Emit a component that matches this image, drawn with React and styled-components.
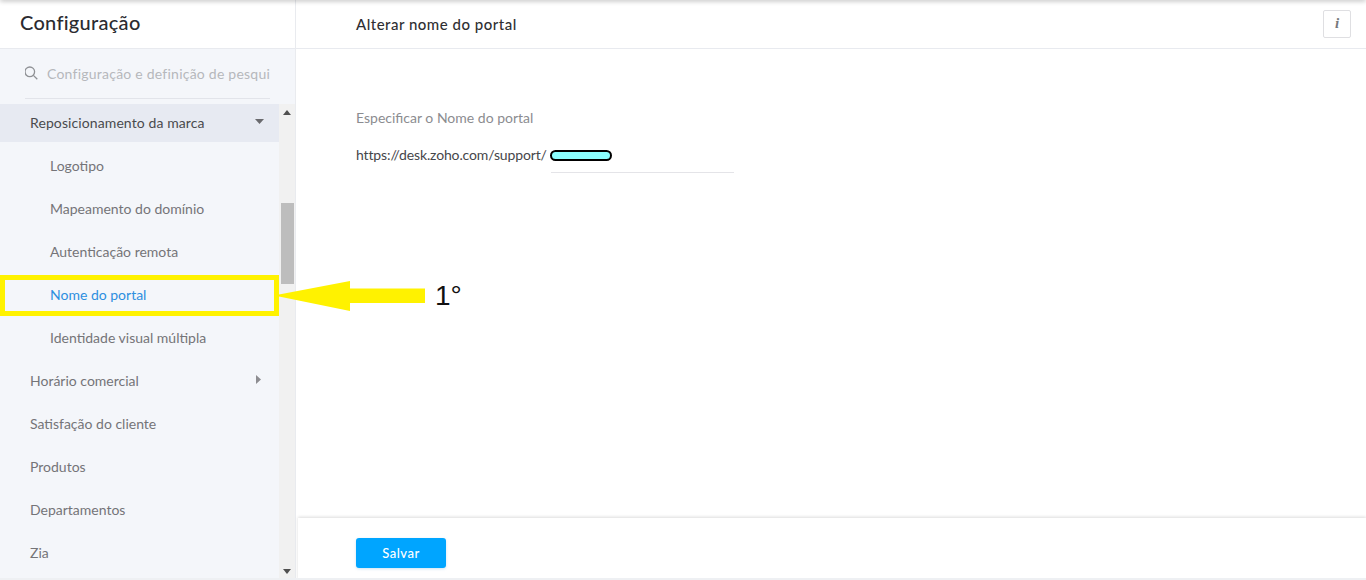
import React from "react";
import styled, { createGlobalStyle } from "styled-components";

const Global = createGlobalStyle`
  html, body { margin: 0; padding: 0; height: 100%; background: #fff; overflow: hidden; }
  body { font-family: Lato, "Open Sans", "Liberation Sans", sans-serif; }
`;

const Page = styled.div`
  position: relative;
  display: flex;
  width: 1366px;
  height: 580px;
  overflow: hidden;
  &::before {
    content: "";
    position: absolute;
    left: 0; right: 0; top: -4px;
    height: 4px;
    box-shadow: 0 1px 5px rgba(0,0,0,.28);
    z-index: 3;
  }
`;

const Sidebar = styled.aside`
  width: 296px;
  flex: none;
  display: flex;
  flex-direction: column;
  background: #f4f6fa;
  border-right: 1px solid #e9ebef;
  box-sizing: border-box;
`;

const SideHeader = styled.div`
  height: 49px;
  flex: none;
  box-sizing: border-box;
  background: #fff;
  border-bottom: 1px solid #e8eaef;
  padding: 9px 0 0 20px;
  font-size: 20px;
  line-height: 27px;
  font-weight: 500;
  letter-spacing: 0.28px;
  color: #2b2b30;
`;

const SearchWrap = styled.div`
  height: 55px;
  flex: none;
  box-sizing: border-box;
  padding: 0 25px;
`;

const SearchRow = styled.div`
  height: 50px;
  box-sizing: border-box;
  width: 245px;
  display: flex;
  align-items: center;
  gap: 9px;
  padding-bottom: 1px;
  border-bottom: 1px solid #e2e4ea;
  overflow: hidden;
  color: #8f9195;
`;

const SearchIcon = styled.svg`
  flex: none;
  margin-left: -1px;
`;

const Placeholder = styled.span`
  font-size: 14px;
  letter-spacing: 0.23px;
  color: #b6b8bc;
  white-space: nowrap;
`;

const Body = styled.div`
  flex: 1;
  display: flex;
  min-height: 0;
`;

const Menu = styled.nav`
  width: 279px;
  flex: none;
  overflow: hidden;
`;

const Row = styled.div`
  position: relative;
  height: 43px;
  display: flex;
  align-items: center;
  justify-content: space-between;
  box-sizing: border-box;
  padding: 0 18px 0 ${p => (p.$child ? 50 : 30)}px;
  font-size: 14px;
  white-space: nowrap;
  color: ${p => (p.$active ? "#2d8fe0" : p.$open ? "#4a4a4e" : "#747478")};
  ${p => p.$open && `
    height: 38px;
    margin-bottom: 2px;
    padding-right: 15px;
    padding-bottom: 1px;
    letter-spacing: 0.1px;
    background: #e7eaf2;
  `}
  ${p => p.$active && `
    &::after {
      content: "";
      position: absolute;
      left: 0; right: 0; top: 2px; bottom: 0;
      border: 5px solid #fff200;
      box-sizing: border-box;
    }
  `}
`;

const Caret = styled.svg`
  display: block;
  flex: none;
  margin-top: ${p => p.$lift || 0}px;
  fill: ${p => p.$fill || "#6a6a6e"};
`;

const Track = styled.div`
  width: 16px;
  flex: none;
  display: flex;
  flex-direction: column;
  background: #f1f1f1;
`;

const TrackArrow = styled.div`
  height: 17px;
  flex: none;
  display: flex;
  align-items: center;
  justify-content: center;
`;

const TrackSpace = styled.div`
  flex: 1;
  padding-top: 82px;
`;

const Thumb = styled.div`
  width: 13px;
  height: 81px;
  margin-left: 2px;
  background: #bdbdbd;
`;

const Main = styled.main`
  flex: 1;
  display: flex;
  flex-direction: column;
  min-width: 0;
`;

const MainHeader = styled.header`
  height: 49px;
  flex: none;
  box-sizing: border-box;
  border-bottom: 1px solid #e8eaef;
  display: flex;
  align-items: center;
  justify-content: space-between;
  padding: 0 15px 0 60px;
`;

const Title = styled.h1`
  margin: 0;
  font-size: 15px;
  font-weight: 500;
  letter-spacing: 0.5px;
  color: #2f2f33;
`;

const InfoButton = styled.div`
  width: 28px;
  height: 28px;
  box-sizing: border-box;
  margin-top: -1px;
  border: 1px solid #dfdfe2;
  border-radius: 2px;
  display: flex;
  align-items: center;
  justify-content: center;
  font: italic 700 15px "Liberation Serif", serif;
  color: #77787c;
`;

const Content = styled.section`
  flex: 1;
  padding: 60px 60px 0;
`;

const FieldLabel = styled.div`
  font-size: 14px;
  line-height: 18px;
  color: #8b8c90;
`;

const UrlRow = styled.div`
  display: flex;
  align-items: flex-start;
  margin-top: 19px;
  font-size: 14px;
  line-height: 18px;
  letter-spacing: -0.13px;
  color: #46464a;
`;

const InputBox = styled.div`
  width: 183px;
  height: 27px;
  box-sizing: border-box;
  margin-left: 4px;
  border-bottom: 1px solid #e4e4e8;
`;

const Redaction = styled.div`
  width: 62px;
  height: 11px;
  margin: 4px 0 0 -1px;
  box-sizing: border-box;
  background: #8bffff;
  border: 2px solid #000;
  border-radius: 6px;
`;

const Footer = styled.footer`
  height: 62px;
  flex: none;
  box-sizing: border-box;
  margin-left: 2px;
  padding: 20px 0 0 58px;
  background: #fff;
  box-shadow: 0 -1px 3px rgba(0,0,0,.14);
`;

const SaveButton = styled.button`
  width: 90px;
  height: 30px;
  border: 0;
  border-radius: 3px;
  background: #00a5ff;
  color: #fff;
  font: 500 13px Lato, sans-serif;
  letter-spacing: 0.5px;
  box-shadow: 0 1px 3px rgba(0,120,200,.2);
`;

const Pointer = styled.svg`
  position: absolute;
  left: 279px;
  top: 281px;
  z-index: 4;
`;

const Ordinal = styled.div`
  position: absolute;
  left: 435px;
  top: 279px;
  z-index: 4;
  font-family: "Liberation Sans", Arial, sans-serif;
  font-size: 28px;
  line-height: 34px;
  color: #111;
`;

const BottomEdge = styled.div`
  position: absolute;
  left: 0; right: 0; bottom: 0;
  height: 2px;
  background: #eef0f3;
  z-index: 2;
`;

const Down = () => (
  <Caret width="9" height="5" viewBox="0 0 9 5" $lift={-3}><path d="M0 0h9L4.500 5z" /></Caret>
);
const Right = () => (
  <Caret width="5" height="9" viewBox="0 0 5 9" $fill="#8d8d91" $lift={-2}><path d="M0 0v9l5-4.500z" /></Caret>
);

const children = ["Logotipo", "Mapeamento do domínio", "Autenticação remota", "Nome do portal", "Identidade visual múltipla"];
const rest = ["Satisfação do cliente", "Produtos", "Departamentos", "Zia"];

export default function App() {
  return (
    <Page>
      <Global />
      <Sidebar>
        <SideHeader>Configuração</SideHeader>
        <SearchWrap>
          <SearchRow>
            <SearchIcon width="14" height="14" viewBox="0 0 14 14" fill="none" stroke="currentColor" strokeWidth="1.3">
              <circle cx="5.8" cy="5.8" r="4.8" />
              <path d="M9.4 9.4 13.3 13.3" />
            </SearchIcon>
            <Placeholder>Configuração e definição de pesquisa</Placeholder>
          </SearchRow>
        </SearchWrap>
        <Body>
          <Menu>
            <Row $open>Reposicionamento da marca<Down /></Row>
            {children.map(c => (
              <Row key={c} $child $active={c === "Nome do portal"}>{c}</Row>
            ))}
            <Row>Horário comercial<Right /></Row>
            {rest.map(r => <Row key={r}>{r}</Row>)}
          </Menu>
          <Track>
            <TrackArrow>
              <Caret width="8" height="5" viewBox="0 0 8 5" $fill="#505050"><path d="M4 0l4 5H0z" /></Caret>
            </TrackArrow>
            <TrackSpace><Thumb /></TrackSpace>
            <TrackArrow>
              <Caret width="8" height="5" viewBox="0 0 8 5" $fill="#505050"><path d="M0 0h8L4 5z" /></Caret>
            </TrackArrow>
          </Track>
        </Body>
      </Sidebar>
      <Main>
        <MainHeader>
          <Title>Alterar nome do portal</Title>
          <InfoButton>i</InfoButton>
        </MainHeader>
        <Content>
          <FieldLabel>Especificar o Nome do portal</FieldLabel>
          <UrlRow>
            https://desk.zoho.com/support/
            <InputBox><Redaction /></InputBox>
          </UrlRow>
        </Content>
        <Footer><SaveButton>Salvar</SaveButton></Footer>
      </Main>
      <BottomEdge />
      <Pointer width="147" height="30" viewBox="0 0 147 30">
        <path d="M0 13.500 71 0v7.500h75v14.500H71V30L0 15.500z" fill="#fff200" />
      </Pointer>
      <Ordinal>1°</Ordinal>
    </Page>
  );
}
